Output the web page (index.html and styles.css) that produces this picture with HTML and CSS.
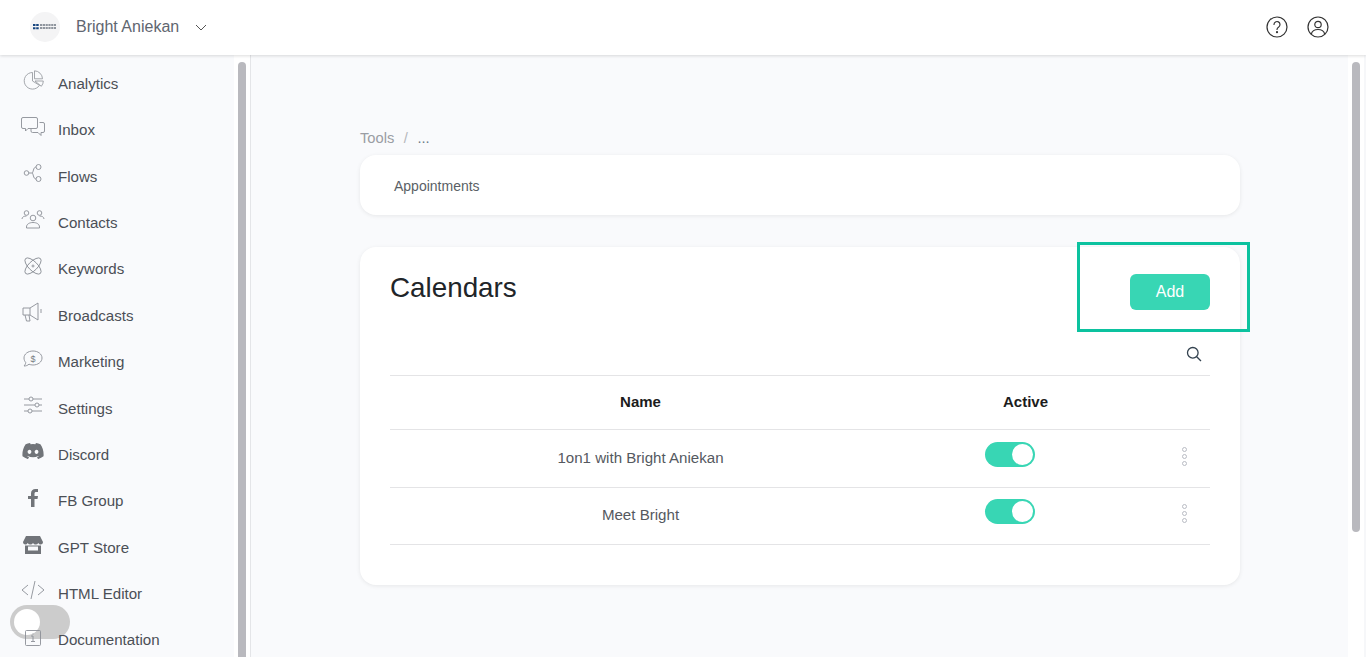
FILE: index.html
```html
<!DOCTYPE html>
<html lang="en">
<head>
<meta charset="utf-8">
<title>Calendars</title>
<link rel="stylesheet" href="styles.css">
</head>
<body>
<header class="topbar">
  <div class="account">
    <span class="logo">
      <svg width="24" height="6" viewBox="0 0 24 6"><path d="M0 0h2.500v2H0zM3.200 0h2.500v2H3.200zM0 3.200h2.500v2H0zM3.200 3.200h2.500v2H3.200z" fill="#17457f"/><path d="M7 1h16M7 4h16" stroke="#6d7580" stroke-width="1.500" stroke-dasharray="2.200 .6" fill="none"/></svg>
    </span>
    <span class="account-name">Bright Aniekan</span>
    <svg class="chev" width="12" height="7" viewBox="0 0 12 7"><path d="M1 1l5 5 5-5" fill="none" stroke="#555" stroke-width="1"/></svg>
  </div>
  <div class="top-icons">
    <svg width="22" height="22" viewBox="0 0 22 22" fill="none" stroke="#333" stroke-width="1.200"><circle cx="11" cy="11" r="10"/><path d="M8 8.500a3 3 0 1 1 4.700 2.500c-1.100.7-1.700 1.300-1.700 2.500" stroke-linecap="round"/><circle cx="11" cy="16.200" r=".5" fill="#333"/></svg>
    <svg width="22" height="22" viewBox="0 0 22 22" fill="none" stroke="#333" stroke-width="1.200"><circle cx="11" cy="11" r="10"/><circle cx="11" cy="8.500" r="3.200"/><path d="M4.300 18c.8-3 3.500-4.500 6.700-4.500s5.900 1.500 6.700 4.500"/></svg>
  </div>
</header>
<div class="shell">
  <aside class="sidebar">
    <nav class="nav">
      <a class="nav-item"><span class="nav-icon pie"><svg width="22" height="20" viewBox="0 0 22 20" fill="none" stroke="#9a9da3" stroke-width=".9"><path d="M9.500 2.500a8.300 8.300 0 1 0 7 12.800L9.500 11z"/><path d="M11.500.8a8.300 8.300 0 0 1 8 8h-8z"/><path d="M12 11h8.300a8 8 0 0 1-2 5.300z"/></svg></span>Analytics</a>
      <a class="nav-item"><span class="nav-icon"><svg width="24" height="19" viewBox="0 0 24 19" fill="none" stroke="#8b8f96" stroke-width=".9"><path d="M2 .5h13a1.500 1.500 0 0 1 1.500 1.500v8a1.500 1.500 0 0 1-1.500 1.500H7L4.500 14v-2.500H2A1.500 1.500 0 0 1 .5 10V2A1.500 1.500 0 0 1 2 .5z"/><path d="M18.500 5.500h3.500a1.500 1.500 0 0 1 1.500 1.500v7a1.500 1.500 0 0 1-1.500 1.500h-2v3l-3-3h-5.500a1.500 1.500 0 0 1-1.500-1.500v-2"/></svg></span>Inbox</a>
      <a class="nav-item"><span class="nav-icon"><svg width="20" height="18" viewBox="0 0 20 18" fill="none" stroke="#8b8f96" stroke-width=".9"><circle cx="3.500" cy="9" r="2.300"/><circle cx="15.500" cy="3" r="2.500"/><circle cx="15.500" cy="15" r="2.500"/><path d="M6 9h3c1.500 0 1-6 4-6M9 9c1.500 0 1 6 4 6"/></svg></span>Flows</a>
      <a class="nav-item"><span class="nav-icon"><svg width="24" height="20" viewBox="0 0 24 20" fill="none" stroke="#8b8f96" stroke-width=".9"><circle cx="5.500" cy="4" r="2.300"/><circle cx="18.500" cy="4" r="2.300"/><circle cx="12" cy="9" r="2.800"/><path d="M1 10c0-2 2-3 4.500-3M23 10c0-2-2-3-4.500-3M5.500 19v-1c0-3 3-4.500 6.500-4.500s6.500 1.500 6.500 4.500v1z"/></svg></span>Contacts</a>
      <a class="nav-item"><span class="nav-icon"><svg width="20" height="20" viewBox="0 0 20 20" fill="none" stroke="#8b8f96" stroke-width=".9"><ellipse cx="10" cy="10" rx="4.500" ry="10.500" transform="rotate(45 10 10)"/><ellipse cx="10" cy="10" rx="4.500" ry="10.500" transform="rotate(-45 10 10)"/><circle cx="10" cy="10" r="1"/></svg></span>Keywords</a>
      <a class="nav-item"><span class="nav-icon"><svg width="22" height="20" viewBox="0 0 22 20" fill="none" stroke="#8b8f96" stroke-width=".9"><path d="M1 6h7l8-5v17l-8-5H1zM8 6v7M3 13l1.500 6H8l-1-6M19 7v4"/></svg></span>Broadcasts</a>
      <a class="nav-item"><span class="nav-icon"><svg width="20" height="18" viewBox="0 0 20 18" fill="none" stroke="#8b8f96" stroke-width=".9"><path d="M10 1c5 0 9 3 9 7s-4 7-9 7c-1.500 0-3-.3-4-.8C4.500 15.500 3 16 1 16c1-1 1.800-2.500 1.700-3.600C1.600 11.200 1 9.700 1 8c0-4 4-7 9-7z"/><text x="10" y="11.500" font-size="9" font-family="Liberation Sans" fill="#777b82" stroke="none" text-anchor="middle">$</text></svg></span>Marketing</a>
      <a class="nav-item"><span class="nav-icon"><svg width="20" height="18" viewBox="0 0 20 18" fill="none" stroke="#8b8f96" stroke-width=".9"><path d="M1 3h5M10 3h9M1 9h11M16 9h3M1 15h4M9 15h10"/><circle cx="8" cy="3" r="2"/><circle cx="14" cy="9" r="2"/><circle cx="7" cy="15" r="2"/></svg></span>Settings</a>
      <a class="nav-item"><span class="nav-icon"><svg width="22" height="16" viewBox="0 0 127 96" fill="#717479"><path d="M107.700 8.100A105 105 0 0 0 81.500 0a72 72 0 0 0-3.400 6.900 97.700 97.700 0 0 0-29.100 0A72 72 0 0 0 45.600 0a105.900 105.900 0 0 0-26.200 8.100C2.800 32.700-1.700 56.600.5 80.200A105.700 105.700 0 0 0 32.700 96.400a77.700 77.700 0 0 0 6.900-11.100 68.400 68.400 0 0 1-10.800-5.200l2.700-2.100a75.600 75.600 0 0 0 64.300 0l2.700 2.100a68.700 68.700 0 0 1-10.900 5.200 77 77 0 0 0 6.900 11.100 105.300 105.300 0 0 0 32.200-16.200c2.600-27.300-4.500-51-18.900-72.100zM42.400 65.700c-6.300 0-11.400-5.700-11.400-12.800s5-12.900 11.400-12.900 11.500 5.800 11.400 12.900c0 7-5 12.800-11.400 12.800zm42.300 0c-6.300 0-11.400-5.700-11.400-12.800s5-12.900 11.400-12.900 11.500 5.800 11.400 12.900c0 7-5 12.800-11.400 12.800z"/></svg></span>Discord</a>
      <a class="nav-item"><span class="nav-icon"><svg width="10" height="18" viewBox="0 0 10 18" fill="#717479"><path d="M3 18V10H0V7h3V4.500C3 1.500 4.800 0 7.400 0H10v3H8.200C7 3 6.500 3.600 6.500 4.700V7H10l-.5 3h-3v8z"/></svg></span>FB Group</a>
      <a class="nav-item"><span class="nav-icon store"><svg width="20" height="18" viewBox="0 0 20 18" fill="#717479"><path d="M3 0h14l3 6a2.500 2.500 0 0 1-2 2.500 2.800 2.800 0 0 1-2.700-1.500 3 3 0 0 1-5.300 0 3 3 0 0 1-5.300 0A2.800 2.800 0 0 1 2 8.500 2.500 2.500 0 0 1 0 6z"/><path d="M2 9.500h16V18H2zM5 10.500v4h10v-4z" fill-rule="evenodd"/></svg></span>GPT Store</a>
      <a class="nav-item"><span class="nav-icon"><svg width="24" height="18" viewBox="0 0 24 18" fill="none" stroke="#8b8f96" stroke-width=".9"><path d="M7 4L1 9l6 5M17 4l6 5-6 5M14 0l-4 18"/></svg></span>HTML Editor</a>
      <a class="nav-item"><span class="nav-icon doc"><svg width="16" height="16" viewBox="0 0 16 16" fill="none" stroke="#8b8f96" stroke-width=".9"><rect x=".5" y=".5" width="15" height="15" rx="1"/><path d="M6 6h2v5M6 11.500h4M8 3.500v1"/></svg></span>Documentation</a>
    </nav>
    <div class="rail"><div class="rail-thumb"></div></div>
  </aside>
  <main class="main">
    <div class="content">
      <div class="crumbs"><span>Tools</span><span class="crumb-sep">/</span><span class="crumb-cur">...</span></div>
      <section class="tab-card"><span class="tab">Appointments</span></section>
      <section class="panel">
        <div class="panel-head">
          <h1 class="panel-title">Calendars</h1>
          <button class="add-btn">Add</button>
        </div>
        <div class="search-row">
          <svg width="16" height="16" viewBox="0 0 16 16" fill="none" stroke="#33424f" stroke-width="1.300"><circle cx="6.800" cy="6.800" r="5.300"/><path d="M10.700 10.700L15 15"/></svg>
        </div>
        <div class="row head-row">
          <div class="col-name">Name</div>
          <div class="col-active">Active</div>
          <div class="col-menu"></div>
        </div>
        <div class="row row-a">
          <div class="col-name">1on1 with Bright Aniekan</div>
          <div class="col-active"><span class="switch"><span class="knob"></span></span></div>
          <div class="col-menu"><span class="dots"><i></i><i></i><i></i></span></div>
        </div>
        <div class="row row-b">
          <div class="col-name">Meet Bright</div>
          <div class="col-active"><span class="switch"><span class="knob"></span></span></div>
          <div class="col-menu"><span class="dots"><i></i><i></i><i></i></span></div>
        </div>
      </section>
    </div>
    <div class="page-rail"><div class="page-thumb"></div></div>
  </main>
</div>
<div class="highlight"></div>
<div class="float-toggle"><span class="float-knob"></span></div>
</body>
</html>
```
FILE: styles.css
```css
* { box-sizing: border-box; }
html, body { margin: 0; height: 100%; overflow: hidden; }
body {
  font-family: "Liberation Sans", Arial, sans-serif;
  background: #f9fafc;
  color: #4b4f56;
  display: flex;
  flex-direction: column;
  height: 657px;
}
.topbar {
  flex: 0 0 55px;
  background: #fff;
  display: flex;
  align-items: center;
  justify-content: space-between;
  padding: 0 37px 2px 30px;
  box-shadow: 0 1px 3px rgba(0,0,0,.14);
  position: relative;
  z-index: 2;
}
.account { display: flex; align-items: center; }
.logo {
  width: 30px; height: 30px; border-radius: 50%;
  background: #f4f4f5;
  display: flex; align-items: center; justify-content: center;
}
.account-name { font-size: 16px; margin-left: 16px; color: #5f6670; }
.chev { margin-left: 16px; margin-top: 2px; }
.top-icons { display: flex; gap: 19px; }
.shell { flex: 1; display: flex; min-height: 0; }
.sidebar {
  flex: 0 0 251px;
  display: flex;
  border-right: 1px solid #e4e5e8;
  overflow: hidden;
  position: relative;
  z-index: 1;
}
.nav { flex: 0 0 234px; padding-top: 5.45px; }
.nav-item {
  height: 46.35px;
  display: flex;
  align-items: center;
  padding-left: 58px;
  position: relative;
  font-size: 15.1px;
  color: #4b4f56;
}
.nav-icon {
  position: absolute;
  left: 21px; top: 9px;
  width: 24px; height: 22px;
  display: flex; align-items: center; justify-content: center;
}
.nav-icon.store { top: 10px; }
.nav-icon.doc { top: 10px; }
.nav-icon.pie { left: 22px; }
.rail { flex: 1; background: #fff; padding: 7px 4px 0; }
.rail-thumb { background: #b9b9be; height: 700px; border-radius: 4px; }
.main { flex: 1; display: flex; min-width: 0; }
.content { flex: 1; padding: 74px 0 0 109px; }
.crumbs { font-size: 14.7px; color: #9a9da3; height: 26px; display: flex; gap: 9.500px; line-height: 18px; }
.crumb-cur { color: #6c7a8a; }
.crumb-sep { color: #b5b7bb; }
.tab-card {
  width: 880px; height: 60px;
  background: #fff;
  border-radius: 16px;
  box-shadow: 0 1px 4px rgba(0,0,0,.08);
  padding: 2px 34px 0;
  display: flex; align-items: center;
  margin-bottom: 32px;
}
.tab { font-size: 14px; color: #5a5f66; }
.panel {
  width: 880px; height: 338px;
  background: #fff;
  border-radius: 16px;
  box-shadow: 0 1px 4px rgba(0,0,0,.08);
  padding: 27px 30px 0;
}
.panel-head { display: flex; justify-content: space-between; height: 70px; }
.panel-title { margin: 0; font-size: 27.8px; font-weight: 400; color: #212529; line-height: 27px; }
.add-btn {
  border: 0;
  width: 80px; height: 36px;
  background: #38d6b4;
  color: #fff;
  border-radius: 6px;
  font: 16px "Liberation Sans", Arial, sans-serif;
}
.search-row {
  height: 32px;
  display: flex;
  justify-content: flex-end;
  padding: 2px 8px 0 0;
  border-bottom: 1px solid #e4e4e6;
}
.row {
  display: flex;
  align-items: center;
  border-bottom: 1px solid #e4e4e6;
  font-size: 15.1px;
  color: #55595f;
}
.row-a { height: 58px; padding-bottom: 2px; }
.row-b { height: 57px; padding-bottom: 3px; }
.head-row { height: 54px; padding-bottom: 2px; font-weight: 700; font-size: 15px; color: #1c1c1c; }
.col-name { flex: 0 0 501px; text-align: center; }
.col-active { flex: 0 0 238px; text-align: center; }
.head-row .col-active { flex-basis: 269px; }
.col-menu { flex: 1; }
.switch {
  display: flex; justify-content: flex-end; align-items: center;
  width: 50px; height: 25px; border-radius: 13px;
  background: #38d6b4; padding-right: 2px;
  margin: -6px auto 0;
}
.knob { width: 21px; height: 21px; border-radius: 50%; background: #fff; }
.dots { display: flex; flex-direction: column; gap: 2px; width: 5px; margin: -2px 0 0 53px; }
.dots i { width: 5px; height: 5px; border: 1.300px solid #b9bcc4; border-radius: 50%; }
.page-rail { flex: 0 0 18px; background: #fff; padding: 7px 4px 0; border-right: 2px solid #f6f7f9; }
.page-thumb { background: #b9b9be; height: 470px; border-radius: 4px; }
.highlight {
  position: absolute;
  left: 1077px; top: 242px;
  width: 173px; height: 90px;
  border: 3px solid #0cc29f;
  z-index: 3;
}
.float-toggle {
  position: absolute;
  left: 10px; top: 605px;
  width: 60px; height: 34px;
  border-radius: 17px;
  background: #ccc;
}
.float-knob {
  position: absolute; left: 4px; top: 4px;
  width: 26px; height: 26px; border-radius: 50%; background: #fff;
}
```
